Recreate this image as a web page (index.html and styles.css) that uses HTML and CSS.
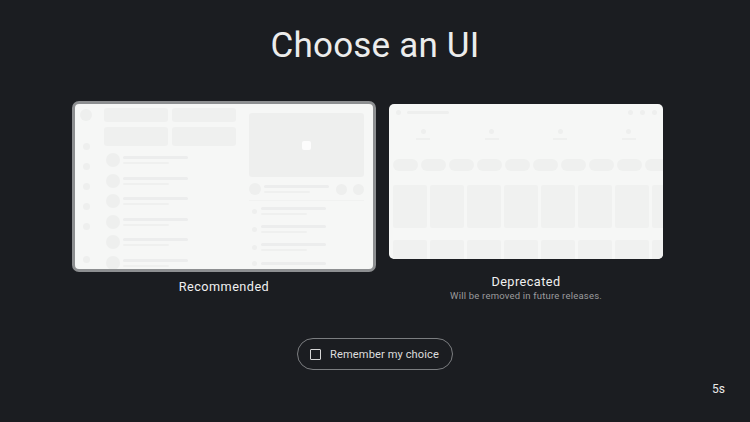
FILE: index.html
```html
<!DOCTYPE html>
<html lang="en">
<head>
<meta charset="utf-8">
<title>Choose an UI</title>
<link rel="stylesheet" href="styles.css">
</head>
<body>
<main class="screen">
  <h1 class="title">Choose an UI</h1>

  <section class="choices">
    <div class="choice choice-focused">
      <div class="card card-new">
        <div class="mock mock-new">
          <div class="m-side">
            <span class="dot dot-lg"></span>
            <span class="dot dot-sm s1"></span>
            <span class="dot dot-sm"></span>
            <span class="dot dot-sm"></span>
            <span class="dot dot-sm"></span>
            <span class="dot dot-sm"></span>
            <span class="dot dot-sm s-last"></span>
          </div>
          <div class="m-main">
            <div class="m-grid">
              <span class="blk h14"></span><span class="blk h14"></span>
              <span class="blk h19"></span><span class="blk h19"></span>
            </div>
            <div class="m-list">
              <div class="m-row"><span class="av"></span><span class="lines"><i class="l1"></i><i class="l2"></i></span></div>
              <div class="m-row"><span class="av"></span><span class="lines"><i class="l1"></i><i class="l2"></i></span></div>
              <div class="m-row"><span class="av"></span><span class="lines"><i class="l1"></i><i class="l2"></i></span></div>
              <div class="m-row"><span class="av"></span><span class="lines"><i class="l1"></i><i class="l2"></i></span></div>
              <div class="m-row"><span class="av"></span><span class="lines"><i class="l1"></i><i class="l2"></i></span></div>
              <div class="m-row"><span class="av"></span><span class="lines"><i class="l1"></i><i class="l2"></i></span></div>
            </div>
          </div>
          <div class="m-panel">
            <div class="video"><span class="play"></span></div>
            <div class="p-head">
              <span class="av av12"></span>
              <span class="lines grow"><i class="l1"></i><i class="l2"></i></span>
              <span class="av av10"></span>
              <span class="av av10"></span>
            </div>
            <div class="p-list">
              <div class="p-row"><span class="dot dot-xs"></span><span class="lines"><i class="l1"></i><i class="l2"></i></span></div>
              <div class="p-row"><span class="dot dot-xs"></span><span class="lines"><i class="l1"></i><i class="l2"></i></span></div>
              <div class="p-row"><span class="dot dot-xs"></span><span class="lines"><i class="l1"></i><i class="l2"></i></span></div>
              <div class="p-row"><span class="dot dot-xs"></span><span class="lines"><i class="l1"></i></span></div>
            </div>
          </div>
        </div>
      </div>
      <p class="label label-focused">Recommended</p>
    </div>

    <div class="choice choice-old">
      <div class="card card-old">
        <div class="mock mock-old">
          <div class="o-top">
            <span class="dot dot-xs"></span>
            <i class="o-name"></i>
            <span class="o-icons"><span class="dot dot-xs"></span><span class="dot dot-xs"></span><span class="dot dot-xs"></span></span>
          </div>
          <div class="o-tabs">
            <span class="tab"><span class="dot dot-xs"></span><i></i></span>
            <span class="tab"><span class="dot dot-xs"></span><i></i></span>
            <span class="tab"><span class="dot dot-xs"></span><i></i></span>
            <span class="tab"><span class="dot dot-xs"></span><i></i></span>
          </div>
          <i class="o-head h-first"></i>
          <div class="o-chips">
            <span></span><span></span><span></span><span></span><span></span><span></span><span></span><span></span><span></span><span></span>
          </div>
          <i class="o-head h-second"></i>
          <div class="o-tiles">
            <span></span><span></span><span></span><span></span><span></span><span></span><span></span><span></span>
          </div>
          <i class="o-head h-third"></i>
          <div class="o-tiles o-tiles-cut">
            <span></span><span></span><span></span><span></span><span></span><span></span><span></span><span></span>
          </div>
        </div>
      </div>
      <p class="label">Deprecated</p>
      <p class="sublabel">Will be removed in future releases.</p>
    </div>
  </section>

  <button class="remember" type="button">
    <span class="checkbox"></span>
    <span class="remember-text">Remember my choice</span>
  </button>

  <div class="countdown">5s</div>
</main>
</body>
</html>
```

FILE: styles.css
```css
* { box-sizing: border-box; }

html, body {
  margin: 0;
  padding: 0;
  background: #1b1d21;
}

body {
  width: 750px;
  height: 422px;
  overflow: hidden;
  font-family: Roboto, "Noto Sans", "Liberation Sans", sans-serif;
  color: #e9e9e9;
}

.screen {
  height: 422px;
  display: flex;
  flex-direction: column;
  align-items: center;
  padding-top: 25px;
}

.title {
  margin: 0;
  font-size: 35px;
  line-height: 42px;
  font-weight: 400;
  color: #ececec;
  letter-spacing: 0.2px;
}

.choices {
  margin-top: 34px;
  width: 604px;
  display: grid;
  grid-template-columns: 302px 302px;
  align-items: start;
  justify-items: center;
}

.choice {
  display: flex;
  flex-direction: column;
  align-items: center;
}

.choice-old { padding-top: 3px; }

.card {
  overflow: hidden;
  background: #f6f7f6;
}

.card-new {
  width: 304px;
  height: 171px;
  border: 3px solid #8d8f91;
  border-radius: 7px;
}

.card-old {
  width: 274px;
  height: 155px;
  border-radius: 5px;
}

.label {
  margin: 15px 0 0;
  font-size: 12.7px;
  line-height: 16px;
  font-weight: 400;
  letter-spacing: 0.45px;
  color: #f0f0f0;
}

.label-focused { margin-top: 7px; }

.sublabel {
  margin: 0;
  font-size: 9.5px;
  line-height: 12px;
  color: #9b9c9e;
  letter-spacing: 0.2px;
}

/* ---- mock thumbnails ---- */
.mock {
  width: 100%;
  height: 100%;
  filter: blur(0.6px);
}

.dot {
  display: block;
  border-radius: 50%;
  background: #eeefee;
  flex: none;
}
.dot-lg { width: 12px; height: 12px; }
.dot-sm { width: 7px; height: 7px; margin-top: 13px; }
.dot-sm.s1 { margin-top: 22px; }
.dot-sm.s-last { margin-top: 26px; }
.dot-xs { width: 5px; height: 5px; }

.lines {
  display: flex;
  flex-direction: column;
  gap: 3px;
}
.lines i {
  display: block;
  height: 3px;
  border-radius: 2px;
  background: #eceded;
}
.lines .l1 { width: 65px; }
.lines .l2 { width: 46px; height: 2px; background: #eff0ef; }
.lines.grow { flex: 1; }

.mock-new {
  display: flex;
  align-items: flex-start;
}

.m-side {
  width: 22px;
  padding-top: 5px;
  display: flex;
  flex-direction: column;
  align-items: center;
}

.m-main {
  width: 133px;
  margin-left: 7px;
  padding-top: 4px;
}

.m-grid {
  display: grid;
  grid-template-columns: 64px 64px;
  gap: 5px 4px;
}
.blk {
  display: block;
  background: #eff0ef;
  border-radius: 3px;
}
.h14 { height: 14px; }
.h19 { height: 19px; }

.m-list {
  margin-top: 7px;
  display: flex;
  flex-direction: column;
  gap: 6.5px;
}
.m-row {
  display: flex;
  align-items: center;
  gap: 3px;
  padding-left: 2px;
}
.av {
  display: block;
  flex: none;
  width: 14px;
  height: 14px;
  border-radius: 50%;
  background: #eeefee;
}
.av12 { width: 12px; height: 12px; }
.av10 { width: 11px; height: 11px; margin-left: 3px; }

.m-panel {
  width: 115px;
  margin-left: 12px;
  padding-top: 9px;
}

.video {
  height: 64px;
  border-radius: 3px;
  background: #eeefee;
  display: flex;
  align-items: center;
  justify-content: center;
}
.play {
  width: 9px;
  height: 9px;
  border-radius: 2px;
  background: #fcfcfc;
}

.p-head {
  margin-top: 6px;
  display: flex;
  align-items: center;
  gap: 3px;
}

.p-list {
  margin-top: 5px;
  padding: 6px 0 0 3px;
  border-top: 1px solid #f1f2f1;
  display: flex;
  flex-direction: column;
  gap: 10px;
}
.p-row {
  display: flex;
  align-items: center;
  gap: 4px;
}

/* deprecated mock */
.mock-old {
  padding: 6px 0 0 4px;
  display: flex;
  flex-direction: column;
}
.o-top {
  display: flex;
  align-items: center;
  gap: 6px;
  padding: 0 6px 0 3px;
}
.o-name {
  display: block;
  width: 42px;
  height: 3px;
  border-radius: 2px;
  background: #eeefee;
}
.o-icons {
  margin-left: auto;
  display: flex;
  gap: 7px;
}
.o-tabs {
  margin: 14px 0 0 -4px;
  display: grid;
  grid-template-columns: repeat(4, 1fr);
}
.tab {
  display: flex;
  flex-direction: column;
  align-items: center;
  gap: 4px;
}
.tab i {
  display: block;
  width: 14px;
  height: 2px;
  background: #eff0ef;
}
.o-head {
  display: block;
  width: 41px;
  height: 3px;
  border-radius: 2px;
  background: #eeefee;
}
.h-first { margin-top: 12px; }
.h-second { margin-top: 5.5px; }
.h-third { margin-top: 7.5px; }

.o-chips {
  margin-top: 6.5px;
  display: flex;
  gap: 3px;
}
.o-chips span {
  flex: none;
  width: 25px;
  height: 12px;
  border-radius: 6px;
  background: #eff0ef;
}
.o-tiles {
  margin-top: 8.5px;
  display: flex;
  gap: 3px;
}
.o-tiles-cut { margin-top: 4.5px; }
.o-tiles span {
  flex: none;
  width: 34px;
  height: 43px;
  border-radius: 2px;
  background: #f0f1f0;
}
.o-tiles-cut span { height: 30px; }

/* ---- remember ---- */
.remember {
  margin-top: 36px;
  height: 32px;
  padding: 0 13px 0 12px;
  display: flex;
  align-items: center;
  gap: 9px;
  background: transparent;
  border: 1px solid #7b7d80;
  border-radius: 16px;
  font-family: inherit;
  cursor: pointer;
}
.checkbox {
  width: 11px;
  height: 11px;
  border: 1.5px solid #d6d6d6;
  border-radius: 1px;
}
.remember-text {
  font-size: 11.1px;
  color: #dedede;
  letter-spacing: 0.1px;
}

.countdown {
  margin-top: auto;
  align-self: flex-end;
  margin-right: 25px;
  margin-bottom: 26px;
  font-size: 12px;
  line-height: 14px;
  color: #eaeaea;
}
```
